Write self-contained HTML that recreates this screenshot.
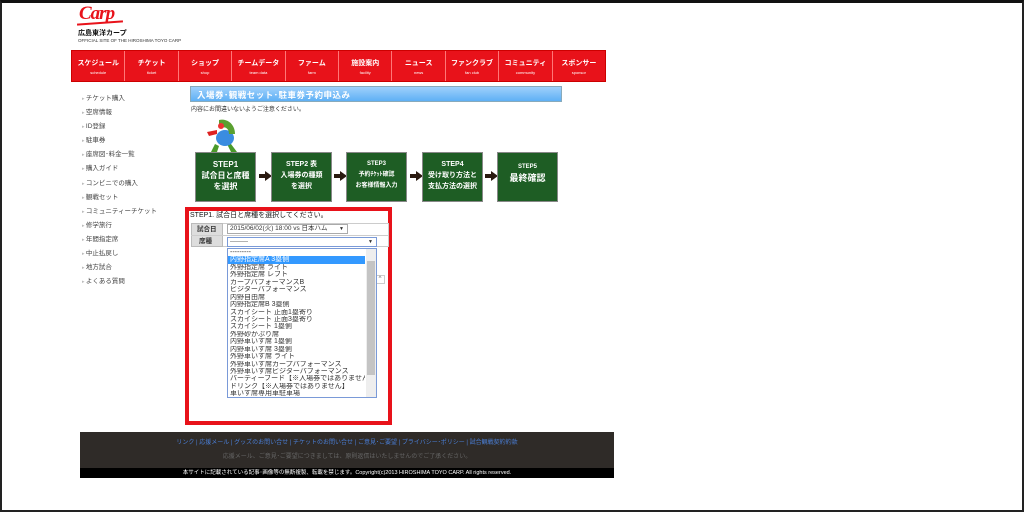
<!DOCTYPE html>
<html><head><meta charset="utf-8"><style>
*{margin:0;padding:0;box-sizing:border-box}
body{width:1024px;height:512px;background:#fff;position:relative;overflow:hidden;font-family:"Liberation Sans","Noto Sans CJK JP",sans-serif;color:#333}
.a{position:absolute}
#frame{position:absolute;left:0;top:0;width:1024px;height:512px;border:2px solid #222;border-top:3px solid #111;pointer-events:none}
.nav{left:71px;top:50px;width:535px;height:32px;background:#e8121a;display:flex;border:1px solid #c00}
.nav div{flex:1;color:#fff;text-align:center;font-size:7px;font-weight:bold;padding-top:8px;border-right:1px solid #f77;line-height:9px}
.nav div:last-child{border-right:none}
.nav span{display:block;font-size:4px;font-weight:normal}
.side div{font-size:6.5px;color:#444;height:14.1px;line-height:10px}
.side div:before{content:"▸ ";color:#bbb;font-size:5px}
.step{position:absolute;top:152px;width:61px;height:50px;background:#1e5d24;border:1px solid #888;color:#fff;font-weight:bold;text-align:center;font-size:7px;line-height:11px;padding-top:6px}
.arr{position:absolute;top:171px;width:0;height:0;border-top:5px solid transparent;border-bottom:5px solid transparent;border-left:7px solid #2a1a10}
.arr:before{content:"";position:absolute;left:-13px;top:-2px;width:7px;height:4px;background:#2a1a10}
.lb div{font-size:7px;height:7.45px;line-height:7.45px;padding-left:2px;color:#333;white-space:nowrap;overflow:hidden;width:137px}
</style></head><body>
<div class="a" style="left:79px;top:3px;color:#e8121a;font:italic bold 19px 'Liberation Serif',serif;letter-spacing:-1px">Carp</div>
<div class="a" style="left:77px;top:22px;width:46px;height:2px;background:#e8121a;transform:rotate(-4deg)"></div>
<div class="a" style="left:78px;top:28px;font-size:7px;font-weight:bold;color:#111">広島東洋カープ</div>
<div class="a" style="left:78px;top:38px;font-size:4.5px;color:#333">OFFICIAL SITE OF THE HIROSHIMA TOYO CARP</div>
<div class="a nav">
<div>スケジュール<span>schedule</span></div><div>チケット<span>ticket</span></div><div>ショップ<span>shop</span></div><div>チームデータ<span>team data</span></div><div>ファーム<span>farm</span></div><div>施設案内<span>facility</span></div><div>ニュース<span>news</span></div><div>ファンクラブ<span>fan club</span></div><div>コミュニティ<span>community</span></div><div>スポンサー<span>sponsor</span></div>
</div>
<div class="a side" style="left:82px;top:94px">
<div>チケット購入</div><div>空席情報</div><div>ID登録</div><div>駐車券</div><div>座席図･料金一覧</div><div>購入ガイド</div><div>コンビニでの購入</div><div>観戦セット</div><div>コミュニティーチケット</div><div>修学旅行</div><div>年間指定席</div><div>中止払戻し</div><div>地方試合</div><div>よくある質問</div>
</div>
<div class="a" style="left:190px;top:86px;width:372px;height:16px;background:linear-gradient(#9fd0fb,#5fb0f5);border:1px solid #8ab;color:#fff;font-size:8.5px;font-weight:bold;padding:2px 6px;letter-spacing:0.5px">入場券･観戦セット･駐車券予約申込み</div>
<div class="a" style="left:191px;top:104px;font-size:6px;color:#333">内容にお間違いないようご注意ください。</div>
<svg class="a" style="left:205px;top:118px" width="36" height="36" viewBox="0 0 36 36">
<path d="M10 26 L6 34 L12 34 L14 28 M22 26 L26 34 L32 34 L26 26" fill="#4a9a2a"/>
<ellipse cx="20" cy="20" rx="9" ry="8" fill="#3a8ce0"/>
<path d="M14 2 C22 0 30 6 30 16 L24 16 C24 10 20 8 14 10 Z" fill="#5aa030"/>
<circle cx="16" cy="8" r="3" fill="#e33"/>
<path d="M2 14 L12 12 L12 16 L4 18Z" fill="#d22"/>
</svg>
<div class="step" style="left:195px;font-size:8px">STEP1<br>試合日と席種<br>を選択</div>
<div class="arr" style="left:265px"></div>
<div class="step" style="left:271px">STEP2 表<br>入場券の種類<br>を選択</div>
<div class="arr" style="left:340px"></div>
<div class="step" style="left:346px;font-size:6px">STEP3<br>予約ﾁｹｯﾄ確認<br>お客様情報入力</div>
<div class="arr" style="left:416px"></div>
<div class="step" style="left:422px">STEP4<br>受け取り方法と<br>支払方法の選択</div>
<div class="arr" style="left:491px"></div>
<div class="step" style="left:497px;padding-top:8px"><span style="font-size:6px">STEP5</span><br><span style="font-size:9px">最終確認</span></div>
<div class="a" style="left:185px;top:207px;width:207px;height:218px;border:4px solid #e8121a"></div>
<div class="a" style="left:190px;top:210px;font-size:7px;color:#111">STEP1. 試合日と席種を選択してください。</div>
<div class="a" style="left:191px;top:223px;width:198px;height:24px;border:1px solid #ccc;background:#fff"></div>
<div class="a" style="left:191px;top:223px;width:32px;height:24px;background:#ddd;border:1px solid #bbb"></div>
<div class="a" style="left:191px;top:235px;width:198px;height:1px;background:#ccc"></div>
<div class="a" style="left:197px;top:225px;font-size:6.5px;line-height:9px;font-weight:bold;color:#333">試合日</div>
<div class="a" style="left:199px;top:237px;font-size:6.5px;line-height:9px;font-weight:bold;color:#333">席種</div>
<div class="a" style="left:227px;top:224px;width:121px;height:10px;border:1px solid #aaa;font-size:6.5px;padding-left:2px;line-height:8px">2015/06/02(火) 18:00 vs 日本ハム <span style="float:right;font-size:5px;padding-right:3px">▼</span></div>
<div class="a" style="left:227px;top:237px;width:150px;height:10px;border:1px solid #7a9ad8;font-size:6px;padding-left:2px;line-height:8px">---------<span style="float:right;font-size:5px;padding-right:3px">▼</span></div>
<div class="a" style="left:375px;top:275px;width:10px;height:9px;border:1px solid #ccc;font-size:6px;line-height:7px;text-align:center;color:#666">^</div>
<div class="a lb" style="left:227px;top:248px;width:150px;height:150px;border:1px solid #7a9ad8;background:#fff;overflow:hidden">
<div>---------</div><div style="background:#3399ff;color:#fff">内野指定席A 3塁側</div><div>外野指定席 ライト</div><div>外野指定席 レフト</div><div>カープパフォーマンスB</div><div>ビジターパフォーマンス</div><div>内野自由席</div><div>内野指定席B 3塁側</div><div>スカイシート 正面1塁寄り</div><div>スカイシート 正面3塁寄り</div><div>スカイシート 1塁側</div><div>外野砂かぶり席</div><div>内野車いす席 1塁側</div><div>内野車いす席 3塁側</div><div>外野車いす席 ライト</div><div>外野車いす席カープパフォーマンス</div><div>外野車いす席ビジターパフォーマンス</div><div>パーティーフード【※入場券ではありません】</div><div>ドリンク【※入場券ではありません】</div><div>車いす席専用車駐車場</div>
<div class="a" style="left:138px;top:0;width:10px;height:148px;background:#eee"></div>
<div class="a" style="left:139px;top:12px;width:8px;height:114px;background:#c4c4c4"></div>
</div>
<div class="a" style="left:80px;top:432px;width:534px;height:37px;background:#2f2b28"></div>
<div class="a" style="left:80px;top:437px;width:534px;text-align:center;font-size:6px;color:#4a7fd8">リンク | 応援メール | グッズのお問い合せ | チケットのお問い合せ | ご意見･ご要望 | プライバシー･ポリシー | 試合観戦契約約款</div>
<div class="a" style="left:80px;top:451px;width:534px;text-align:center;font-size:6px;color:#666">応援メール、ご意見･ご要望につきましては、原則返信はいたしませんのでご了承ください。</div>
<div class="a" style="left:80px;top:468px;width:534px;height:10px;background:#000;color:#fff;text-align:center;font-size:5.5px;line-height:10px">本サイトに記載されている記事･画像等の無断複製、転載を禁じます。Copyright(c)2013 HIROSHIMA TOYO CARP. All rights reserved.</div>
<div id="frame"></div>
</body></html>
